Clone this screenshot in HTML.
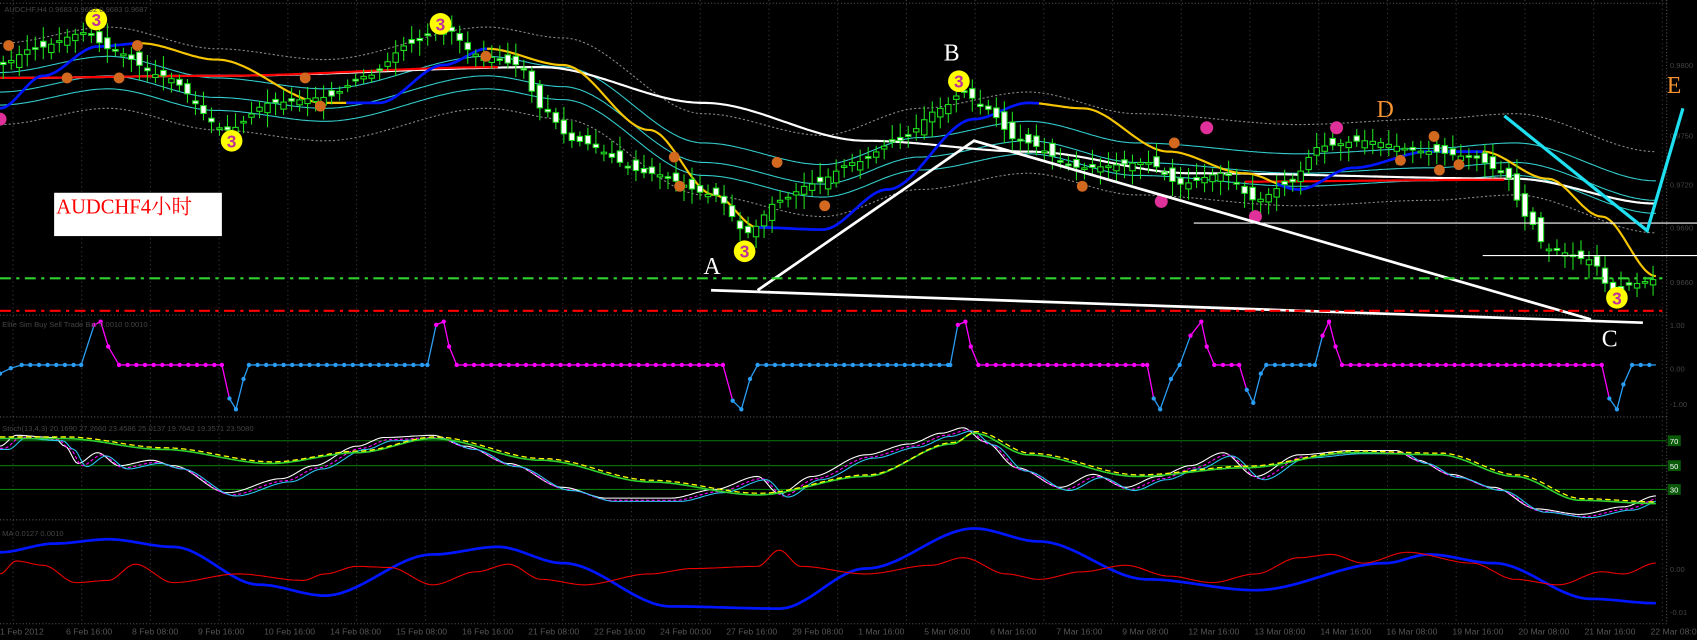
<!DOCTYPE html>
<html><head><meta charset="utf-8">
<style>
html,body{margin:0;padding:0;background:#000;overflow:hidden}
svg{display:block}
</style></head>
<body>
<svg id="s" width="1697" height="640" viewBox="0 0 1568 591" preserveAspectRatio="none" xmlns="http://www.w3.org/2000/svg" font-family="Liberation Sans, sans-serif">
<rect width="1568" height="591" fill="#000"/>
<g id="grid"></g>
<g id="plot"></g>
<!-- label box -->
<rect x="50" y="178" width="155" height="40" fill="#fff"/>
<text x="52" y="197" font-family="Liberation Serif, Noto Serif CJK SC, serif" font-size="19" fill="#f00">AUDCHF4小时</text>
<!-- hand-drawn lines -->
<g stroke="#fff" stroke-width="2.5" fill="none">
<polyline points="657,268 1518,298"/>
<polyline points="700,268 900,130 1470,295"/>
</g>
<g stroke="#fff" stroke-width="1" fill="none">
<line x1="1103" y1="206" x2="1568" y2="206"/>
<line x1="1370" y1="236" x2="1568" y2="236"/>
</g>
<polyline points="1390,107 1522,213 1555,100" stroke="#1ee0f0" stroke-width="3" fill="none"/>
<line x1="0" y1="257" x2="1540" y2="257" stroke="#2fd12f" stroke-width="2" stroke-dasharray="10,5,3,5"/>
<line x1="0" y1="287" x2="1540" y2="287" stroke="#f00" stroke-width="2" stroke-dasharray="10,5,3,5"/>
<g font-family="Liberation Serif, serif" font-size="22">
<text x="650" y="253" fill="#fff">A</text>
<text x="872" y="56" fill="#fff">B</text>
<text x="1480" y="320" fill="#fff">C</text>
<text x="1272" y="108" fill="#f7942f">D</text>
<text x="1540" y="86" fill="#f7942f">E</text>
</g>
</svg>
<script>
const NS="http://www.w3.org/2000/svg";
const plot=document.getElementById('plot'),grid=document.getElementById('grid');
function el(t,a,p){const e=document.createElementNS(NS,t);for(const k in a)e.setAttribute(k,a[k]);(p||plot).appendChild(e);return e;}
function interp(pts,x){for(let i=0;i<pts.length-1;i++){if(x>=pts[i][0]&&x<=pts[i+1][0]){const t=(x-pts[i][0])/(pts[i+1][0]-pts[i][0]);const s=t*t*(3-2*t);return pts[i][1]+(pts[i+1][1]-pts[i][1])*s;}}return x<pts[0][0]?pts[0][1]:pts[pts.length-1][1];}
function curve(pts,x0,x1,step){let a=[];for(let x=x0;x<=x1;x+=step)a.push(x.toFixed(1)+','+interp(pts,x).toFixed(1));return a.join(' ');}
function line(pts,x0,x1,c,w,extra){const o={points:curve(pts,x0,x1,2),stroke:c,'stroke-width':w,fill:'none'};Object.assign(o,extra||{});el('polyline',o);}
// grid
const G={stroke:'#3a3a4a','stroke-width':1,'stroke-dasharray':'1,3'};
for(let x=12;x<1540;x+=63.5)el('line',Object.assign({x1:x,y1:0,x2:x,y2:575},G),grid);
[[291],[385],[480],[576]].forEach(y=>el('line',{x1:0,y1:y[0],x2:1540,y2:y[0],stroke:'#555','stroke-width':1,'stroke-dasharray':'1,2'},grid));
el('line',{x1:1540,y1:0,x2:1540,y2:576,stroke:'#555','stroke-width':1,'stroke-dasharray':'1,2'},grid);
el('line',{x1:0,y1:3,x2:1540,y2:3,stroke:'#555','stroke-width':1,'stroke-dasharray':'1,2'},grid);
// price path
const P=[[0,60],[30,45],[80,30],[100,45],[150,70],[210,120],[250,95],[300,90],[340,70],[380,40],[410,25],[440,50],[480,60],[500,100],[530,130],[600,160],[660,180],[690,215],[720,185],[750,170],[790,150],[830,130],[870,100],[890,85],[910,100],[940,130],[1000,155],[1060,150],[1090,170],[1130,160],[1160,185],[1190,170],[1220,135],[1260,130],[1320,140],[1360,145],[1390,160],[1410,200],[1430,230],[1470,240],[1490,270],[1510,262],[1530,258]];
// bands
const MID=[[0,75],[100,60],[200,80],[300,90],[450,60],[520,70],[650,140],[760,160],[850,135],[950,120],[1050,140],[1200,150],[1320,145],[1400,140],[1530,175]];
const up=MID.map(p=>[p[0],p[1]-35]),dn=MID.map(p=>[p[0],p[1]+40]);
line(up,0,1530,'#888',1,{'stroke-dasharray':'2,2'});line(dn,0,1530,'#888',1,{'stroke-dasharray':'2,2'});
line(MID.map(p=>[p[0],p[1]-8]),0,1530,'#3cc',1);line(MID.map(p=>[p[0],p[1]+10]),0,1530,'#3cc',1);line(MID.map(p=>[p[0],p[1]+22]),0,1530,'#3cc',1);
// slow white/red MA
line([[0,72],[200,70],[500,62],[650,95],[800,130],[950,140],[1100,160],[1400,165],[1530,188]],0,1530,'#fff',2);
line([[0,72],[200,70],[460,62]],0,460,'#f00',2);line([[1100,168],[1400,166]],1150,1390,'#f00',2);
// fast MA
const F=[[0,100],[40,70],[90,43],[130,40],[200,55],[300,95],[350,95],[410,60],[450,45],[520,60],[600,120],[660,180],[700,210],[760,212],[820,175],[900,110],[950,95],[1000,100],[1080,140],[1150,160],[1200,175],[1250,155],[1320,140],[1370,140],[1430,165],[1480,200],[1530,255]];
line(F,0,130,'#0016ff',2.5);line(F,130,320,'#f7c600',2);line(F,320,450,'#0016ff',2.5);line(F,450,700,'#f7c600',2);line(F,700,960,'#0016ff',2.5);line(F,960,1180,'#f7c600',2);line(F,1180,1370,'#0016ff',2.5);line(F,1370,1530,'#f7c600',2);
// candles
let seed=3;function rnd(){seed=(seed*9301+49297)%233280;return seed/233280;}
for(let x=3;x<1530;x+=7.4){const c=interp(P,x),o=interp(P,x-7.4)+(rnd()-0.5)*14;const top=Math.min(o,c),bot=Math.max(o,c);const up=c<o;
el('line',{x1:x,y1:top-4-rnd()*10,x2:x,y2:bot+4+rnd()*10,stroke:'#1ee01e','stroke-width':1});
el('rect',{x:x-2.5,y:top,width:5,height:Math.max(1.5,bot-top),fill:up?'#000':'#fff',stroke:up?'#1ee01e':'#1ee01e','stroke-width':1});}
// markers
[[89,18],[407,22],[214,130],[688,232],[886,75],[1494,275]].forEach(p=>{el('circle',{cx:p[0],cy:p[1],r:10,fill:'#ff0'});el('text',{x:p[0],y:p[1]+6,'text-anchor':'middle','font-size':16,fill:'#c0309a','font-weight':'bold'}).textContent='3';});
[[8,42],[127,42],[62,72],[110,72],[282,72],[296,98],[449,52],[623,145],[628,172],[718,150],[762,190],[1000,172],[1085,132],[1325,126],[1330,157],[1294,148],[1348,152]].forEach(p=>el('circle',{cx:p[0],cy:p[1],r:5,fill:'#d2691e'}));
[[0,110],[1115,118],[1235,118],[1073,186],[1160,200]].forEach(p=>el('circle',{cx:p[0],cy:p[1],r:6,fill:'#e0309a'}));
// panel 2
const Q=[[0,345,'b'],[10,340,'b'],[20,337,'b'],[75,337,'b'],[87,300,'b'],[93,297,'m'],[100,320,'m'],[110,337,'m'],[205,337,'m'],[212,368,'m'],[218,378,'b'],[225,350,'b'],[230,337,'b'],[395,337,'b'],[403,300,'b'],[410,297,'m'],[415,320,'m'],[422,337,'m'],[668,337,'m'],[677,370,'m'],[685,378,'b'],[693,350,'b'],[700,337,'b'],[878,337,'b'],[885,300,'b'],[892,297,'m'],[897,320,'m'],[904,337,'m'],[1060,337,'m'],[1066,368,'m'],[1072,378,'b'],[1082,350,'b'],[1090,337,'b'],[1100,310,'b'],[1110,297,'m'],[1115,320,'m'],[1122,337,'m'],[1145,337,'m'],[1152,360,'m'],[1158,372,'b'],[1165,345,'b'],[1170,337,'b'],[1215,337,'b'],[1222,310,'b'],[1228,297,'m'],[1234,320,'m'],[1240,337,'m'],[1480,337,'m'],[1487,368,'m'],[1494,378,'b'],[1500,355,'b'],[1508,337,'b'],[1530,337,'b']];
for(let i=0;i<Q.length-1;i++){const a=Q[i],b=Q[i+1];const c=b[2]=='m'&&a[2]=='m'||(b[2]=='m'&&b[1]<a[1]===false&&a[2]=='m')?'#f0f':(b[2]=='b'?'#2a9df4':'#f0f');
const step=(b[1]==a[1])?8:(b[0]-a[0]);for(let x=a[0];x<b[0];x+=step){const x2=Math.min(b[0],x+step);const y1=a[1]+(b[1]-a[1])*(x-a[0])/(b[0]-a[0]),y2=a[1]+(b[1]-a[1])*(x2-a[0])/(b[0]-a[0]);
el('line',{x1:x,y1:y1,x2:x2,y2:y2,stroke:c,'stroke-width':1.2});el('circle',{cx:x,cy:y1,r:2,fill:c});}}
// RSI panel
[[407],[430],[452]].forEach(y=>el('line',{x1:0,y1:y[0],x2:1540,y2:y[0],stroke:'#0a7a0a','stroke-width':1}));
const R=[[0,412],[15,402],[50,404],[60,412],[72,428],[90,418],[110,430],[140,425],[160,430],[210,455],[260,442],[290,430],[330,412],[355,404],[400,402],[430,412],[470,428],[520,450],[560,460],[620,460],[660,452],[700,440],[720,456],[750,440],[800,420],[840,410],[870,400],[890,395],[910,408],[940,432],[980,450],[1010,438],[1040,450],[1070,440],[1100,430],[1130,418],[1160,440],[1200,420],[1250,416],[1290,416],[1310,425],[1340,438],[1380,450],[1420,470],[1460,475],[1500,468],[1530,458]];
line(R,0,1530,'#fff',1);line(R.map(p=>[p[0]+4,p[1]+2]),0,1530,'#f0f',1,{'stroke-dasharray':'3,2'});line(R.map(p=>[p[0]+8,p[1]+3]),0,1530,'#29c5f0',1);
const S=[[0,405],[60,405],[150,415],[250,428],[330,418],[400,405],[500,425],[600,445],[700,457],[800,440],[880,410],[900,400],[950,420],[1050,440],[1150,432],[1250,418],[1330,420],[1400,440],[1460,462],[1530,465]];
line(S,0,1530,'#2fd12f',1.5);line(S.map(p=>[p[0]+2,p[1]-1.5]),0,1530,'#ff0',1.2,{'stroke-dasharray':'5,3'});
// bottom panel
line([[0,510],[50,502],[100,498],[160,505],[240,540],[300,550],[400,512],[460,505],[520,520],[620,560],[720,562],[800,525],[900,488],[960,500],[1060,535],[1160,545],[1280,520],[1320,512],[1380,520],[1470,553],[1530,557]],0,1530,'#0016ff',2.5);
line([[0,530],[15,518],[40,522],[70,538],[100,536],[125,521],[160,538],[220,530],[280,536],[300,530],[330,523],[360,524],[400,540],[440,528],[470,521],[500,535],[540,540],[600,530],[640,525],[700,523],[720,508],[740,523],[800,530],[860,522],[890,515],[930,530],[960,535],[1000,528],[1040,522],[1080,532],[1120,538],[1160,530],[1200,515],[1230,512],[1260,520],[1300,510],[1360,520],[1400,535],[1440,540],[1480,528],[1500,530],[1530,520]],0,1530,'#e00',1);
// labels
const T=['1 Feb 2012','6 Feb 16:00','8 Feb 08:00','9 Feb 16:00','10 Feb 16:00','14 Feb 08:00','15 Feb 08:00','16 Feb 16:00','21 Feb 08:00','22 Feb 16:00','24 Feb 00:00','27 Feb 16:00','29 Feb 08:00','1 Mar 16:00','5 Mar 08:00','6 Mar 16:00','7 Mar 16:00','9 Mar 08:00','12 Mar 16:00','13 Mar 08:00','14 Mar 16:00','16 Mar 08:00','19 Mar 16:00','20 Mar 08:00','21 Mar 16:00','22 Mar 08:00'];
T.forEach((t,i)=>el('text',{x:i*61,y:586,'font-size':8,fill:'#555'}).textContent=t);
el('text',{x:4,y:11,'font-size':7,fill:'#444'}).textContent='AUDCHF,H4 0.9683 0.9692 0.9683 0.9687';
el('text',{x:2,y:302,'font-size':7,fill:'#444'}).textContent='Elite Sim Buy Sell  Trade Bar 0.0010 0.0010';
el('text',{x:2,y:398,'font-size':7,fill:'#444'}).textContent='Stoch(13,4,3) 20.1690 27.2660 23.4586 25.0137 19.7642 19.3571 23.5080';
el('text',{x:2,y:495,'font-size':7,fill:'#444'}).textContent='MA 0.0127 0.0010';
[[60,'0.9800'],[125,'0.9750'],[170,'0.9720'],[210,'0.9690'],[260,'0.9660'],[300,'1.00'],[340,'0.00'],[373,'-1.00'],[407,'70'],[430,'50'],[452,'30'],[525,'0.00'],[565,'-0.01']].forEach(p=>el('text',{x:1543,y:p[0]+3,'font-size':7,fill:p[1].length<3?'#fff':'#444'}).textContent=p[1]);
[[407],[430],[452]].forEach(y=>el('rect',{x:1541,y:y[0]-5,width:12,height:10,fill:'#0a5a0a'},grid));
</script>
</body></html>
